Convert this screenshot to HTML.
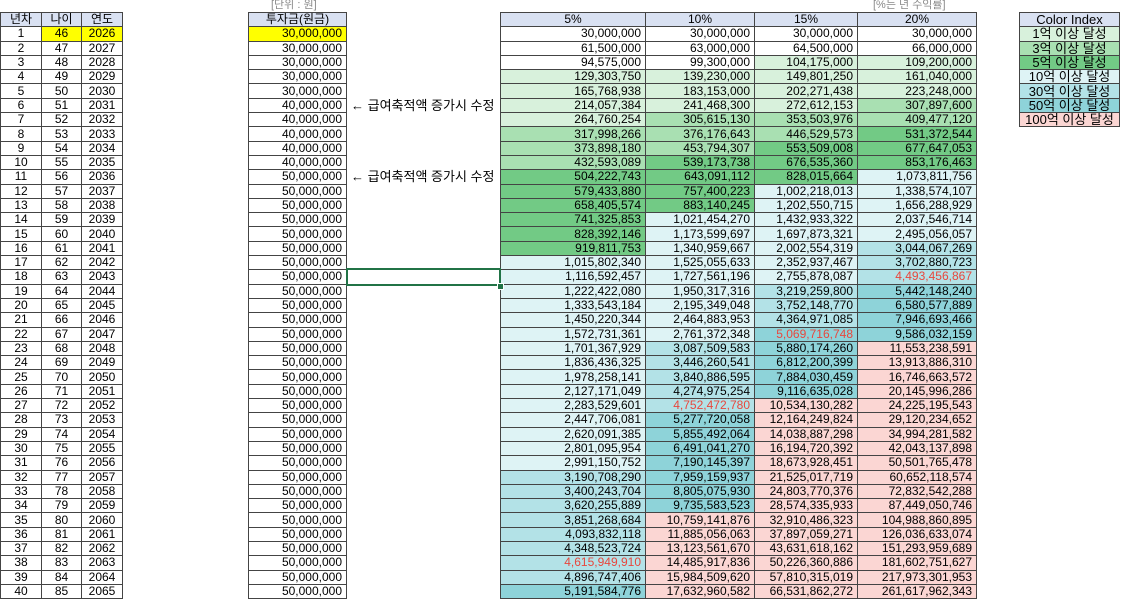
<!DOCTYPE html>
<html><head><meta charset="utf-8"><style>
body{margin:0;background:#fff;width:1123px;height:600px;overflow:hidden;position:relative;font-family:"Liberation Sans","Noto Sans CJK KR",sans-serif;font-size:12px;color:#000}
table{position:absolute;left:0;top:12px;border-collapse:collapse;table-layout:fixed;width:1119px}
td{padding:0;height:13.3px;line-height:13px;white-space:nowrap;overflow:hidden}
tr{height:14.3px}
.a{border:1px solid #444;text-align:center}
.n,.v{border:1px solid #444;text-align:right;padding-right:4px}
.h{background:#d9e1f2;text-align:center;padding-right:0}
.y{background:#ffff00}
.t{font-size:13px;padding-left:4px;overflow:visible}
.ci{border:1px solid #444;text-align:center;font-size:13px}
.g1{background:#d8f1dc}.g2{background:#a9e0b2}.g3{background:#72ca85}
.c1{background:#def3f5}.c2{background:#b3e2e7}.c3{background:#8ed3d9}.p{background:#fbd6d3}
.r{color:#e8473d}
.lbl{position:absolute;top:-4px;font-size:11px;color:#8a8a8a}
.sel{position:absolute;left:346px;top:268px;width:151px;height:14px;border:2px solid #217346}
.sq{position:absolute;left:497px;top:283px;width:5px;height:5px;background:#217346;border:1px solid #fff}
</style></head><body>
<div class="lbl" style="left:271px">[단위 : 원]</div>
<div class="lbl" style="left:873px">[%는 년 수익률]</div>
<table>
<colgroup><col style="width:41px"><col style="width:40px"><col style="width:41px"><col style="width:126px"><col style="width:98px"><col style="width:154px"><col style="width:145px"><col style="width:109px"><col style="width:103px"><col style="width:119px"><col style="width:43px"><col style="width:100px"></colgroup>
<tr><td class="a h">년차</td><td class="a h">나이</td><td class="a h">연도</td><td></td><td class="a h">투자금(원금)</td><td></td><td class="a h">5%</td><td class="a h">10%</td><td class="a h">15%</td><td class="a h">20%</td><td></td><td class="ci h">Color Index</td></tr>
<tr><td class="a">1</td><td class="a y">46</td><td class="a y">2026</td><td></td><td class="n y">30,000,000</td><td></td><td class="v">30,000,000</td><td class="v">30,000,000</td><td class="v">30,000,000</td><td class="v">30,000,000</td><td></td><td class="ci g1">1억 이상 달성</td></tr>
<tr><td class="a">2</td><td class="a">47</td><td class="a">2027</td><td></td><td class="n">30,000,000</td><td></td><td class="v">61,500,000</td><td class="v">63,000,000</td><td class="v">64,500,000</td><td class="v">66,000,000</td><td></td><td class="ci g2">3억 이상 달성</td></tr>
<tr><td class="a">3</td><td class="a">48</td><td class="a">2028</td><td></td><td class="n">30,000,000</td><td></td><td class="v">94,575,000</td><td class="v">99,300,000</td><td class="v">104,175,000</td><td class="v">109,200,000</td><td></td><td class="ci g3">5억 이상 달성</td></tr>
<tr><td class="a">4</td><td class="a">49</td><td class="a">2029</td><td></td><td class="n">30,000,000</td><td></td><td class="v">129,303,750</td><td class="v">139,230,000</td><td class="v">149,801,250</td><td class="v">161,040,000</td><td></td><td class="ci c1">10억 이상 달성</td></tr>
<tr><td class="a">5</td><td class="a">50</td><td class="a">2030</td><td></td><td class="n">30,000,000</td><td></td><td class="v">165,768,938</td><td class="v">183,153,000</td><td class="v">202,271,438</td><td class="v">223,248,000</td><td></td><td class="ci c2">30억 이상 달성</td></tr>
<tr><td class="a">6</td><td class="a">51</td><td class="a">2031</td><td></td><td class="n">40,000,000</td><td class="t">← 급여축적액 증가시 수정</td><td class="v">214,057,384</td><td class="v">241,468,300</td><td class="v">272,612,153</td><td class="v">307,897,600</td><td></td><td class="ci c3">50억 이상 달성</td></tr>
<tr><td class="a">7</td><td class="a">52</td><td class="a">2032</td><td></td><td class="n">40,000,000</td><td></td><td class="v">264,760,254</td><td class="v">305,615,130</td><td class="v">353,503,976</td><td class="v">409,477,120</td><td></td><td class="ci p">100억 이상 달성</td></tr>
<tr><td class="a">8</td><td class="a">53</td><td class="a">2033</td><td></td><td class="n">40,000,000</td><td></td><td class="v">317,998,266</td><td class="v">376,176,643</td><td class="v">446,529,573</td><td class="v">531,372,544</td><td></td><td></td></tr>
<tr><td class="a">9</td><td class="a">54</td><td class="a">2034</td><td></td><td class="n">40,000,000</td><td></td><td class="v">373,898,180</td><td class="v">453,794,307</td><td class="v">553,509,008</td><td class="v">677,647,053</td><td></td><td></td></tr>
<tr><td class="a">10</td><td class="a">55</td><td class="a">2035</td><td></td><td class="n">40,000,000</td><td></td><td class="v">432,593,089</td><td class="v">539,173,738</td><td class="v">676,535,360</td><td class="v">853,176,463</td><td></td><td></td></tr>
<tr><td class="a">11</td><td class="a">56</td><td class="a">2036</td><td></td><td class="n">50,000,000</td><td class="t">← 급여축적액 증가시 수정</td><td class="v">504,222,743</td><td class="v">643,091,112</td><td class="v">828,015,664</td><td class="v">1,073,811,756</td><td></td><td></td></tr>
<tr><td class="a">12</td><td class="a">57</td><td class="a">2037</td><td></td><td class="n">50,000,000</td><td></td><td class="v">579,433,880</td><td class="v">757,400,223</td><td class="v">1,002,218,013</td><td class="v">1,338,574,107</td><td></td><td></td></tr>
<tr><td class="a">13</td><td class="a">58</td><td class="a">2038</td><td></td><td class="n">50,000,000</td><td></td><td class="v">658,405,574</td><td class="v">883,140,245</td><td class="v">1,202,550,715</td><td class="v">1,656,288,929</td><td></td><td></td></tr>
<tr><td class="a">14</td><td class="a">59</td><td class="a">2039</td><td></td><td class="n">50,000,000</td><td></td><td class="v">741,325,853</td><td class="v">1,021,454,270</td><td class="v">1,432,933,322</td><td class="v">2,037,546,714</td><td></td><td></td></tr>
<tr><td class="a">15</td><td class="a">60</td><td class="a">2040</td><td></td><td class="n">50,000,000</td><td></td><td class="v">828,392,146</td><td class="v">1,173,599,697</td><td class="v">1,697,873,321</td><td class="v">2,495,056,057</td><td></td><td></td></tr>
<tr><td class="a">16</td><td class="a">61</td><td class="a">2041</td><td></td><td class="n">50,000,000</td><td></td><td class="v">919,811,753</td><td class="v">1,340,959,667</td><td class="v">2,002,554,319</td><td class="v">3,044,067,269</td><td></td><td></td></tr>
<tr><td class="a">17</td><td class="a">62</td><td class="a">2042</td><td></td><td class="n">50,000,000</td><td></td><td class="v">1,015,802,340</td><td class="v">1,525,055,633</td><td class="v">2,352,937,467</td><td class="v">3,702,880,723</td><td></td><td></td></tr>
<tr><td class="a">18</td><td class="a">63</td><td class="a">2043</td><td></td><td class="n">50,000,000</td><td></td><td class="v">1,116,592,457</td><td class="v">1,727,561,196</td><td class="v">2,755,878,087</td><td class="v r">4,493,456,867</td><td></td><td></td></tr>
<tr><td class="a">19</td><td class="a">64</td><td class="a">2044</td><td></td><td class="n">50,000,000</td><td></td><td class="v">1,222,422,080</td><td class="v">1,950,317,316</td><td class="v">3,219,259,800</td><td class="v">5,442,148,240</td><td></td><td></td></tr>
<tr><td class="a">20</td><td class="a">65</td><td class="a">2045</td><td></td><td class="n">50,000,000</td><td></td><td class="v">1,333,543,184</td><td class="v">2,195,349,048</td><td class="v">3,752,148,770</td><td class="v">6,580,577,889</td><td></td><td></td></tr>
<tr><td class="a">21</td><td class="a">66</td><td class="a">2046</td><td></td><td class="n">50,000,000</td><td></td><td class="v">1,450,220,344</td><td class="v">2,464,883,953</td><td class="v">4,364,971,085</td><td class="v">7,946,693,466</td><td></td><td></td></tr>
<tr><td class="a">22</td><td class="a">67</td><td class="a">2047</td><td></td><td class="n">50,000,000</td><td></td><td class="v">1,572,731,361</td><td class="v">2,761,372,348</td><td class="v r">5,069,716,748</td><td class="v">9,586,032,159</td><td></td><td></td></tr>
<tr><td class="a">23</td><td class="a">68</td><td class="a">2048</td><td></td><td class="n">50,000,000</td><td></td><td class="v">1,701,367,929</td><td class="v">3,087,509,583</td><td class="v">5,880,174,260</td><td class="v">11,553,238,591</td><td></td><td></td></tr>
<tr><td class="a">24</td><td class="a">69</td><td class="a">2049</td><td></td><td class="n">50,000,000</td><td></td><td class="v">1,836,436,325</td><td class="v">3,446,260,541</td><td class="v">6,812,200,399</td><td class="v">13,913,886,310</td><td></td><td></td></tr>
<tr><td class="a">25</td><td class="a">70</td><td class="a">2050</td><td></td><td class="n">50,000,000</td><td></td><td class="v">1,978,258,141</td><td class="v">3,840,886,595</td><td class="v">7,884,030,459</td><td class="v">16,746,663,572</td><td></td><td></td></tr>
<tr><td class="a">26</td><td class="a">71</td><td class="a">2051</td><td></td><td class="n">50,000,000</td><td></td><td class="v">2,127,171,049</td><td class="v">4,274,975,254</td><td class="v">9,116,635,028</td><td class="v">20,145,996,286</td><td></td><td></td></tr>
<tr><td class="a">27</td><td class="a">72</td><td class="a">2052</td><td></td><td class="n">50,000,000</td><td></td><td class="v">2,283,529,601</td><td class="v r">4,752,472,780</td><td class="v">10,534,130,282</td><td class="v">24,225,195,543</td><td></td><td></td></tr>
<tr><td class="a">28</td><td class="a">73</td><td class="a">2053</td><td></td><td class="n">50,000,000</td><td></td><td class="v">2,447,706,081</td><td class="v">5,277,720,058</td><td class="v">12,164,249,824</td><td class="v">29,120,234,652</td><td></td><td></td></tr>
<tr><td class="a">29</td><td class="a">74</td><td class="a">2054</td><td></td><td class="n">50,000,000</td><td></td><td class="v">2,620,091,385</td><td class="v">5,855,492,064</td><td class="v">14,038,887,298</td><td class="v">34,994,281,582</td><td></td><td></td></tr>
<tr><td class="a">30</td><td class="a">75</td><td class="a">2055</td><td></td><td class="n">50,000,000</td><td></td><td class="v">2,801,095,954</td><td class="v">6,491,041,270</td><td class="v">16,194,720,392</td><td class="v">42,043,137,898</td><td></td><td></td></tr>
<tr><td class="a">31</td><td class="a">76</td><td class="a">2056</td><td></td><td class="n">50,000,000</td><td></td><td class="v">2,991,150,752</td><td class="v">7,190,145,397</td><td class="v">18,673,928,451</td><td class="v">50,501,765,478</td><td></td><td></td></tr>
<tr><td class="a">32</td><td class="a">77</td><td class="a">2057</td><td></td><td class="n">50,000,000</td><td></td><td class="v">3,190,708,290</td><td class="v">7,959,159,937</td><td class="v">21,525,017,719</td><td class="v">60,652,118,574</td><td></td><td></td></tr>
<tr><td class="a">33</td><td class="a">78</td><td class="a">2058</td><td></td><td class="n">50,000,000</td><td></td><td class="v">3,400,243,704</td><td class="v">8,805,075,930</td><td class="v">24,803,770,376</td><td class="v">72,832,542,288</td><td></td><td></td></tr>
<tr><td class="a">34</td><td class="a">79</td><td class="a">2059</td><td></td><td class="n">50,000,000</td><td></td><td class="v">3,620,255,889</td><td class="v">9,735,583,523</td><td class="v">28,574,335,933</td><td class="v">87,449,050,746</td><td></td><td></td></tr>
<tr><td class="a">35</td><td class="a">80</td><td class="a">2060</td><td></td><td class="n">50,000,000</td><td></td><td class="v">3,851,268,684</td><td class="v">10,759,141,876</td><td class="v">32,910,486,323</td><td class="v">104,988,860,895</td><td></td><td></td></tr>
<tr><td class="a">36</td><td class="a">81</td><td class="a">2061</td><td></td><td class="n">50,000,000</td><td></td><td class="v">4,093,832,118</td><td class="v">11,885,056,063</td><td class="v">37,897,059,271</td><td class="v">126,036,633,074</td><td></td><td></td></tr>
<tr><td class="a">37</td><td class="a">82</td><td class="a">2062</td><td></td><td class="n">50,000,000</td><td></td><td class="v">4,348,523,724</td><td class="v">13,123,561,670</td><td class="v">43,631,618,162</td><td class="v">151,293,959,689</td><td></td><td></td></tr>
<tr><td class="a">38</td><td class="a">83</td><td class="a">2063</td><td></td><td class="n">50,000,000</td><td></td><td class="v r">4,615,949,910</td><td class="v">14,485,917,836</td><td class="v">50,226,360,886</td><td class="v">181,602,751,627</td><td></td><td></td></tr>
<tr><td class="a">39</td><td class="a">84</td><td class="a">2064</td><td></td><td class="n">50,000,000</td><td></td><td class="v">4,896,747,406</td><td class="v">15,984,509,620</td><td class="v">57,810,315,019</td><td class="v">217,973,301,953</td><td></td><td></td></tr>
<tr><td class="a">40</td><td class="a">85</td><td class="a">2065</td><td></td><td class="n">50,000,000</td><td></td><td class="v">5,191,584,776</td><td class="v">17,632,960,582</td><td class="v">66,531,862,272</td><td class="v">261,617,962,343</td><td></td><td></td></tr>
</table>
<div class="sel"></div><div class="sq"></div>
<script>
document.querySelectorAll('td.v').forEach(function(td){
 if(td.classList.contains('h'))return;
 var v=parseInt(td.textContent.replace(/,/g,''),10);
 var c=v>=1e10?'p':v>=5e9?'c3':v>=3e9?'c2':v>=1e9?'c1':v>=5e8?'g3':v>=3e8?'g2':v>=1e8?'g1':'';
 if(c)td.classList.add(c);
});
</script>
</body></html>
